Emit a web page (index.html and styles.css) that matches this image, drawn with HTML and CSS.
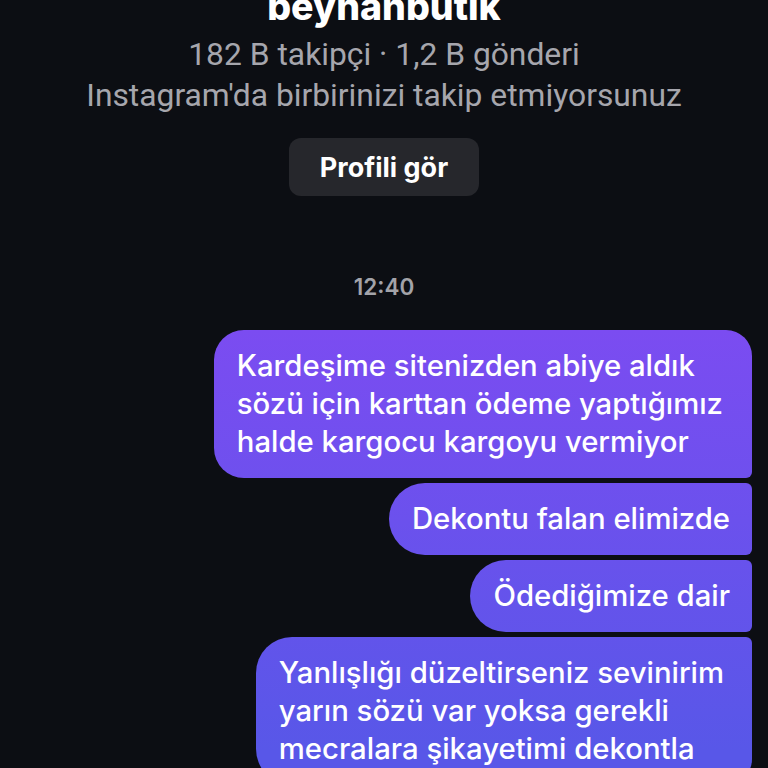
FILE: index.html
```html
<!DOCTYPE html>
<html lang="tr">
<head>
<meta charset="utf-8">
<title>beyhanbutik</title>
<link rel="stylesheet" href="styles.css">
</head>
<body>
<main class="chat">
  <header class="profile">
    <h1 class="name">beyhanbutik</h1>
    <p class="meta first-meta">182 B takipçi · 1,2 B gönderi</p>
    <p class="meta">Instagram'da birbirinizi takip etmiyorsunuz</p>
    <button class="profile-btn">Profili gör</button>
  </header>
  <div class="time">12:40</div>
  <section class="thread">
    <div class="bubble first">Kardeşime sitenizden abiye aldık<br>sözü için karttan ödeme yaptığımız<br>halde kargocu kargoyu vermiyor</div>
    <div class="bubble middle">Dekontu falan elimizde</div>
    <div class="bubble middle">Ödediğimize dair</div>
    <div class="bubble last">Yanlışlığı düzeltirseniz sevinirim<br>yarın sözü var yoksa gerekli<br>mecralara şikayetimi dekontla</div>
  </section>
</main>
</body>
</html>
```
FILE: styles.css
```css
* { box-sizing: border-box; }
html, body { margin: 0; padding: 0; }
body {
  background: #0c0e13;
  height: 768px;
  overflow: hidden;
  font-family: Inter, "Noto Sans", sans-serif;
  color: #fff;
}
.chat {
  display: flex;
  flex-direction: column;
}
.profile {
  display: flex;
  flex-direction: column;
  align-items: center;
}
.name {
  margin: -15px 0 0;
  font-size: 37.5px;
  line-height: 44px;
  font-weight: 800;
  color: #fff;
}
.meta {
  margin: 0;
  font-family: Roboto, "Liberation Sans", sans-serif;
  font-size: 31.8px;
  line-height: 41px;
  color: #a6a6ad;
}
.meta.first-meta { margin-top: 5px; }
.profile-btn {
  margin-top: 22px;
  width: 190px;
  height: 58px;
  border: none;
  border-radius: 12px;
  background: #26272c;
  color: #fff;
  font-family: Inter, sans-serif;
  font-weight: 700;
  font-size: 27px;
}
.time {
  margin-top: 78px;
  align-self: center;
  font-size: 22.5px;
  font-weight: 600;
  color: #a3a3a9;
  line-height: 26px;
}
.thread {
  margin-top: 30px;
  padding-right: 16px;
  display: flex;
  flex-direction: column;
  align-items: flex-end;
  gap: 5px;
}
.bubble {
  padding: 17px 22px 17px 23px;
  font-size: 29.3px;
  line-height: 38px;
  font-weight: 500;
  white-space: nowrap;
  color: #fff;
  background: linear-gradient(to bottom, #7b4cf1 330px, #5857e8 750px);
  background-attachment: fixed;
  border-radius: 36px 6px 6px 36px;
}
.bubble.first {
  padding-right: 29px;
  border-radius: 30px 26px 6px 30px;
}
.bubble.last {
  padding-right: 28px;
  border-radius: 36px 6px 26px 36px;
}
```
